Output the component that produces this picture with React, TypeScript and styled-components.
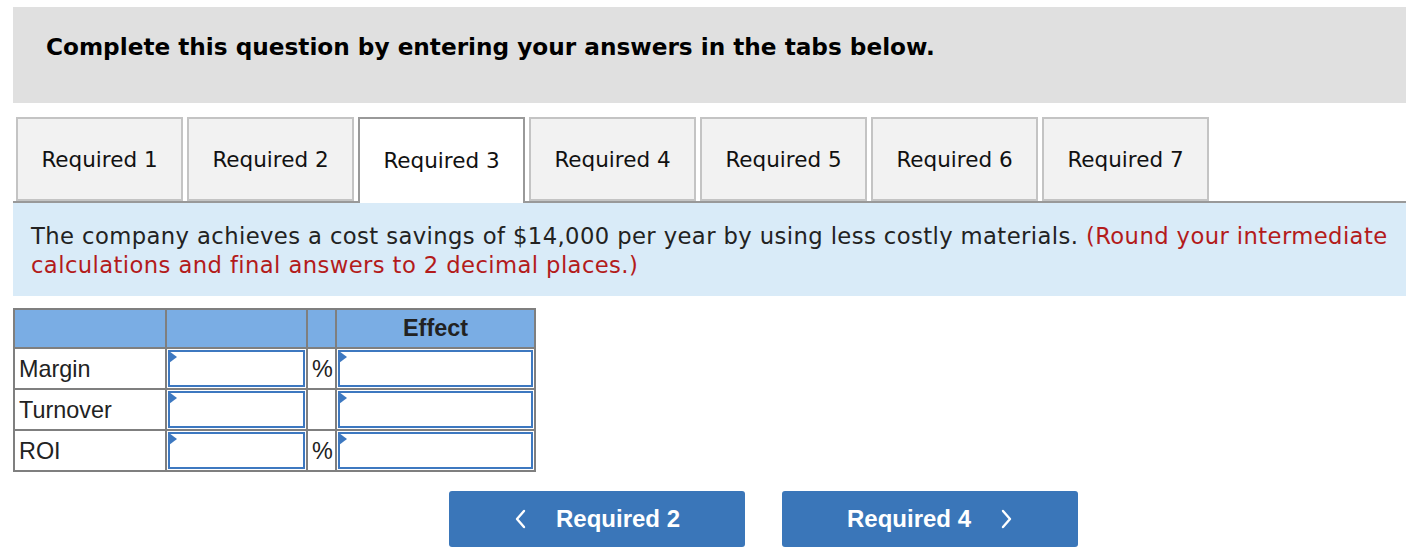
import React from "react";
import styled, { createGlobalStyle } from "styled-components";

const GlobalStyle = createGlobalStyle`
  body {
    margin: 0;
    background: #ffffff;
    font-family: "DejaVu Sans", Verdana, sans-serif;
  }
`;

const Page = styled.div`
  padding: 7px 0 0 13px;
  width: 1393px;
`;

const Banner = styled.div`
  height: 96px;
  box-sizing: border-box;
  background: #e0e0e0;
  padding: 26px 33px 0;
  font-size: 23.2px;
  line-height: 28px;
  font-weight: bold;
  color: #000;
`;

const TabRow = styled.div`
  display: flex;
  margin-top: 14px;
  padding-left: 3px;
  border-bottom: 2px solid #999999;
`;

const Tab = styled.div<{ $active?: boolean }>`
  width: 167px;
  box-sizing: border-box;
  margin-right: 4px;
  display: flex;
  align-items: center;
  justify-content: center;
  font-size: 21.5px;
  color: #111;
  background: ${({ $active }) => ($active ? "#ffffff" : "#f2f2f2")};
  border: 2px solid ${({ $active }) => ($active ? "#999999" : "#c4c4c4")};
  border-bottom: ${({ $active }) => ($active ? "none" : "2px solid #c4c4c4")};
  margin-bottom: ${({ $active }) => ($active ? "-2px" : "0")};
  height: ${({ $active }) => ($active ? "86px" : "84px")};
  padding-bottom: ${({ $active }) => ($active ? "2px" : "0")};
`;

const Info = styled.div`
  background: #d9ebf8;
  padding: 19px 12px 16px 18px;
  font-size: 22.7px;
  letter-spacing: 0.4px;
  line-height: 29px;
  color: #222;
`;

const Hint = styled.span`
  color: #b31b1b;
`;

const Grid = styled.table`
  margin-top: 12px;
  border-collapse: collapse;
  font-family: "Liberation Sans", Arial, sans-serif;
  font-size: 23.4px;
  color: #222;
`;

const HeadCell = styled.th<{ $w: number }>`
  width: ${({ $w }) => $w}px;
  height: 39px;
  box-sizing: border-box;
  padding: 0;
  background: #7aade4;
  border: 2px solid #7f7f7f;
  font-weight: bold;
  text-align: center;
  vertical-align: top;
  line-height: 37px;
`;

const LabelCell = styled.td`
  height: 38px;
  padding: 1px 4px 0;
  border: 2px solid #7f7f7f;
  text-align: left;
`;

const InputCell = styled.td`
  height: 39px;
  padding: 0;
  border: 2px solid #7f7f7f;
`;

const UnitCell = styled.td`
  padding: 1px 0 0 4px;
  border: 2px solid #7f7f7f;
  text-align: left;
`;

const Field = styled.div`
  position: relative;
  margin: 1px;
  height: 37px;
  box-sizing: border-box;
  border: 2px solid #3d78c0;
  background: #fff;
`;

const Marker = styled.span`
  position: absolute;
  left: -1px;
  top: -1px;
  width: 0;
  height: 0;
  border-top: 6px solid transparent;
  border-bottom: 6px solid transparent;
  border-left: 8px solid #3d78c0;
`;

const NavRow = styled.div`
  display: flex;
  gap: 37px;
  margin: 19px 0 0 436px;
`;

const NavButton = styled.button`
  width: 296px;
  height: 56px;
  border: none;
  border-radius: 3px;
  background: #3a76b9;
  color: #fff;
  font-family: "Liberation Sans", Arial, sans-serif;
  font-weight: bold;
  font-size: 24px;
  display: flex;
  align-items: center;
  justify-content: center;
  gap: 30px;
  padding: 0;
`;

const Chevron = ({ dir }: { dir: "left" | "right" }) => (
  <svg width="12" height="20" viewBox="0 0 12 20">
    <polyline
      points={dir === "left" ? "10,2 3,10 10,18" : "2,2 9,10 2,18"}
      fill="none"
      stroke="#fff"
      strokeWidth="2.4"
      strokeLinecap="round"
      strokeLinejoin="round"
    />
  </svg>
);

const rows = [
  { label: "Margin", unit: "%" },
  { label: "Turnover", unit: "" },
  { label: "ROI", unit: "%" },
];

const tabs = [1, 2, 3, 4, 5, 6, 7];

export default function App() {
  return (
    <Page>
      <GlobalStyle />
      <Banner>Complete this question by entering your answers in the tabs below.</Banner>
      <TabRow>
        {tabs.map((n) => (
          <Tab key={n} $active={n === 3}>
            Required {n}
          </Tab>
        ))}
      </TabRow>
      <Info>
        The company achieves a cost savings of $14,000 per year by using less costly materials.{" "}
        <Hint>(Round your intermediate calculations and final answers to 2 decimal places.)</Hint>
      </Info>
      <Grid>
        <thead>
          <tr>
            <HeadCell $w={152} />
            <HeadCell $w={141} />
            <HeadCell $w={29} />
            <HeadCell $w={199}>Effect</HeadCell>
          </tr>
        </thead>
        <tbody>
          {rows.map((r) => (
            <tr key={r.label}>
              <LabelCell>{r.label}</LabelCell>
              <InputCell>
                <Field>
                  <Marker />
                </Field>
              </InputCell>
              <UnitCell>{r.unit}</UnitCell>
              <InputCell>
                <Field>
                  <Marker />
                </Field>
              </InputCell>
            </tr>
          ))}
        </tbody>
      </Grid>
      <NavRow>
        <NavButton>
          <Chevron dir="left" />
          Required 2
        </NavButton>
        <NavButton>
          Required 4
          <Chevron dir="right" />
        </NavButton>
      </NavRow>
    </Page>
  );
}
